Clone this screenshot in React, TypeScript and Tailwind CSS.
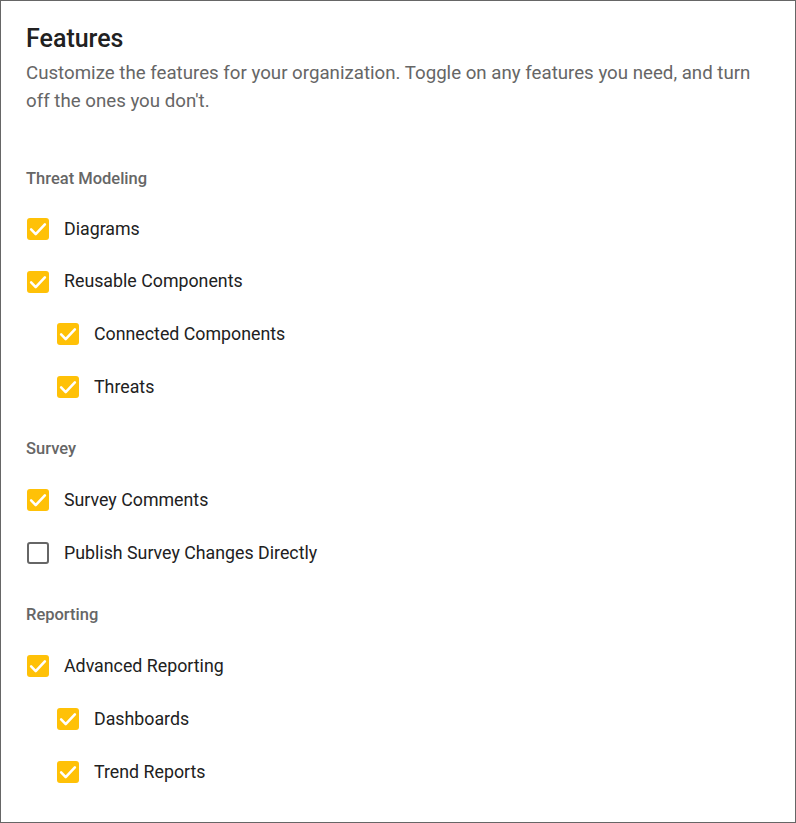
import React, { useState } from 'react'

type Item = { key: string; label: string; level: number; checked: boolean }
type Section = { title: string; items: Item[] }

const SECTIONS: Section[] = [
  {
    title: 'Threat Modeling',
    items: [
      { key: 'diagrams', label: 'Diagrams', level: 0, checked: true },
      { key: 'reusable', label: 'Reusable Components', level: 0, checked: true },
      { key: 'connected', label: 'Connected Components', level: 1, checked: true },
      { key: 'threats', label: 'Threats', level: 1, checked: true },
    ],
  },
  {
    title: 'Survey',
    items: [
      { key: 'comments', label: 'Survey Comments', level: 0, checked: true },
      { key: 'publish', label: 'Publish Survey Changes Directly', level: 0, checked: false },
    ],
  },
  {
    title: 'Reporting',
    items: [
      { key: 'advanced', label: 'Advanced Reporting', level: 0, checked: true },
      { key: 'dashboards', label: 'Dashboards', level: 1, checked: true },
      { key: 'trend', label: 'Trend Reports', level: 1, checked: true },
    ],
  },
]

function Box({ checked }: { checked: boolean }) {
  if (!checked)
    return <span className="w-[22px] h-[22px] rounded-[3px] border-2 border-[#666] bg-white flex-shrink-0" />
  return (
    <span className="w-[22px] h-[22px] rounded-[3px] bg-[#ffc107] flex items-center justify-center flex-shrink-0">
      <svg viewBox="0 0 24 24" className="w-[22px] h-[22px]" fill="none" stroke="white" strokeWidth={2.8} strokeLinecap="round" strokeLinejoin="round">
        <polyline points="4.5 12.5 9.5 17.5 19.5 7" />
      </svg>
    </span>
  )
}

export default function App() {
  const init: Record<string, boolean> = {}
  SECTIONS.forEach(s => s.items.forEach(i => (init[i.key] = i.checked)))
  const [checks, setChecks] = useState(init)

  return (
    <div className="w-[796px] h-[823px] border border-[#666] bg-white pl-[25px] pr-[25px] pt-[22px]" style={{ fontFamily: 'Roboto, "Noto Sans", sans-serif' }}>
      <h1 className="text-[25px] leading-[32px] font-medium text-[#212121]">Features</h1>
      <p className="mt-[4px] text-[18.7px] leading-[28px] text-[#666]">
        Customize the features for your organization. Toggle on any features you need, and turn off the ones you don't.
      </p>

      <div className="mt-[38px]">
        {SECTIONS.map((s, si) => (
          <div key={s.title} className={si > 0 ? 'mt-[11px]' : ''}>
            <div className={`h-[49.5px] flex items-center text-[16.5px] font-medium text-[#666] ${si === 0 ? 'pt-[3px]' : ''}`}>{s.title}</div>
            {s.items.map(item => (
              <label
                key={item.key}
                className={`h-[52.75px] flex items-center gap-[15px] cursor-pointer ${item.level ? 'pl-[31px]' : 'pl-[1px]'}`}
                onClick={() => setChecks(c => ({ ...c, [item.key]: !c[item.key] }))}
              >
                <Box checked={checks[item.key]} />
                <span className="text-[17.8px] text-[#212121]">{item.label}</span>
              </label>
            ))}
          </div>
        ))}
      </div>
    </div>
  )
}
